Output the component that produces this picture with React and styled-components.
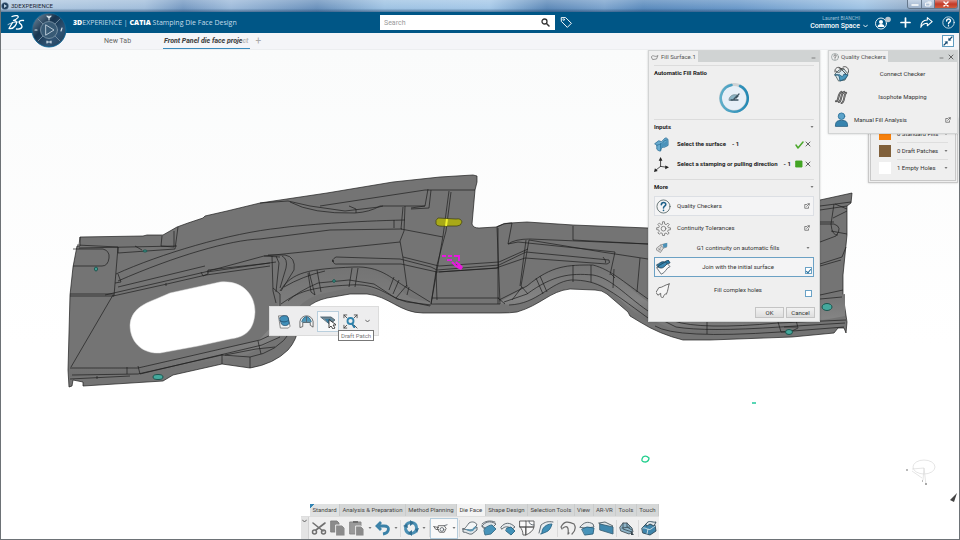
import React from "react";
import styled, { createGlobalStyle } from "styled-components";

const Global = createGlobalStyle`
  * { box-sizing: border-box; }
  body { margin: 0; background: #fff; font-family: Roboto, "Open Sans", sans-serif; font-size: 6px; line-height: 8px; color: #333; }
  button, input { font: inherit; color: inherit; margin: 0; padding: 0; border: 0; background: none; }
  svg { display: block; flex: none; }
`;

/* ---------- window frame ---------- */
const Page = styled.div`
  min-height: 100vh;
  display: grid;
  grid-template-rows: 12px 21px 17px 1fr;
  border: solid #6d7276;
  border-width: 0 1px 1px;
  overflow: hidden;
`;
const TitleBar = styled.div`
  display: flex;
  justify-content: space-between;
  background:
    linear-gradient(180deg, rgba(255,255,255,.22), rgba(255,255,255,0) 70%, rgba(20,60,100,.55) 100%),
    linear-gradient(90deg, #b3cbe2 0, #a2bedb 15%, #7599c2 19%, #9dbada 24%, #6a91bc 33%, #9fc3e3 40%, #a5c8e8 51%, #5d89b8 57%, #7ba3cd 63%, #5b8bbd 67%, #6c9aca 77%, #9fc3e4 90%, #90a8c4 96%);
`;
const AppName = styled.div`
  display: flex;
  align-items: center;
  gap: 2px;
  color: #1b2733;
`;
const WinButtons = styled.div`
  display: flex;
  align-self: flex-start;
  margin-right: 1px;
  border: solid #66788c;
  border-width: 0 1px 1px;
  border-radius: 0 0 3px 3px;
  overflow: hidden;
`;
const WinButton = styled.button`
  width: ${(p) => (p.$close ? "23px" : "13px")};
  height: 8px;
  display: grid;
  place-items: center;
  color: #fff;
  background: ${(p) => (p.$close ? "linear-gradient(#dc8c82,#c43a28 50%,#cf5d3e)" : "linear-gradient(#c6d5e6,#9db1ca)")};
  & + & { border-left: 1px solid #66788c; }
`;

/* ---------- header ---------- */
const Header = styled.header`
  display: grid;
  grid-template-columns: 379fr 175px 404fr;
  align-items: center;
  background: #005686;
  color: #fff;
`;
const Brand = styled.div`
  position: relative;
  display: flex;
  align-items: center;
  padding-left: 6px;
  gap: 47px;
  font-family: "Open Sans", sans-serif;
  font-size: 7px;
  color: #c5dce9;
  white-space: nowrap;
  b { color: #fff; font-weight: 800; }
`;
const Compass = styled.button`
  position: absolute;
  left: 30px;
  top: -2px;
  z-index: 5;
`;
const SearchBox = styled.label`
  height: 15px;
  display: flex;
  align-items: center;
  padding: 0 5px 0 4px;
  background: #fff;
  color: #444;
  input { flex: 1; min-width: 0; outline: 0; font-size: 7px; }
  input::placeholder { color: #999; opacity: 1; }
`;
const HeaderTools = styled.div`
  display: flex;
  align-items: center;
  padding: 0 4px 0 5px;
`;
const User = styled.button`
  margin-left: auto;
  margin-right: 7px;
  text-align: right;
  font-size: 7px;
  font-weight: 500;
  line-height: 9px;
  white-space: nowrap;
  color: #fff;
  small { display: block; padding-right: 8px; font-size: 5px; font-weight: 400; line-height: 7px; color: #9cc0d6; }
  span { display: flex; align-items: center; gap: 3px; }
`;
const IconRow = styled.div`
  display: flex;
  align-items: center;
  gap: 9px;
`;
const IconButton = styled.button`
  display: grid;
  place-items: center;
`;

/* ---------- document tabs ---------- */
const TabBar = styled.nav`
  display: flex;
  align-items: center;
  padding: 0 5px 0 102px;
  background: #f4f5f8;
  border-bottom: 1px solid #eceef0;
  font-size: 7px;
`;
const DocTab = styled.button`
  height: 15px;
  padding: 0 ${(p) => (p.$active ? "2px" : "1px")} 0 1px;
  margin-right: ${(p) => (p.$active ? "5px" : "31px")};
  white-space: nowrap;
  color: #666;
  font-weight: ${(p) => (p.$active ? 800 : 400)};
  font-style: ${(p) => (p.$active ? "italic" : "normal")};
  border-bottom: ${(p) => (p.$active ? "1px solid #3a8bbd" : "1px solid transparent")};
  span { color: ${(p) => (p.$active ? "#444" : "inherit")}; }
  i { color: #bbb; }
`;
const AddTab = styled.button`
  color: #aaa;
  font-size: 10px;
`;
const Collapse = styled.button`
  margin-left: auto;
  width: 12px;
  height: 12px;
  display: grid;
  place-items: center;
  border: 1px solid #5f9cc0;
  background: #fff;
`;

/* ---------- workspace ---------- */
const Canvas = styled.main`
  position: relative;
  background: linear-gradient(#fafbfb, #fff 60%);
  overflow: hidden;
`;
const Scene = styled.svg`
  position: absolute;
  inset: 0;
  width: 100%;
  height: 100%;
`;
const Panel = styled.section`
  position: absolute;
  background: #efefef;
  border: 1px solid #d2d4d4;
  box-shadow: 0 0 2px rgba(0,0,0,.2);
`;
const FillPanel = styled(Panel)`
  top: 0;
  right: 139px;
  width: 172px;
`;
const CheckPanel = styled(Panel)`
  top: 0;
  right: 1px;
  width: 130px;
`;
const CountPanel = styled(Panel)`
  top: 68px;
  right: 1px;
  width: 90px;
  padding: 4px 7px 4px 8px;
  border: 3px double #c8c8c8;
`;
const PanelHead = styled.header`
  display: flex;
  align-items: center;
  height: 11px;
  padding-right: 3px;
  gap: 4px;
  background: #d0d3d3;
  color: #555;
`;
const PanelTitle = styled.div`
  display: flex;
  align-items: center;
  gap: 2px;
  height: 100%;
  padding: 0 2px;
  margin-right: auto;
  background: #efefef;
  white-space: nowrap;
`;
const PanelBody = styled.div`
  padding: ${(p) => (p.$flush ? "0 5px 2px" : "3px 5px")};
`;
const SectionHead = styled.h2`
  display: flex;
  justify-content: space-between;
  align-items: center;
  height: 15px;
  margin: 0;
  border-top: 1px solid #dcdcdc;
  font-size: 6px;
  font-weight: 700;
  color: #222;
`;
const RatioDial = styled.div`
  display: grid;
  place-items: center;
  height: 39px;
  padding-bottom: 3px;
`;
const Field = styled.div`
  display: grid;
  grid-template-columns: 22px 1fr 9px 6px;
  place-items: center start;
  height: 20px;
  margin-bottom: ${(p) => (p.$last ? "5px" : 0)};
  padding-right: 3px;
  white-space: nowrap;
  font-weight: 700;
  color: #222;
  column-gap: 1px;
`;
const FieldText = styled.div`
  display: flex;
  gap: 6px;
`;
const Options = styled.div`
  padding-top: 2px;
`;
const Option = styled.label`
  display: grid;
  grid-template-columns: 21px 1fr 8px;
  align-items: center;
  justify-items: ${(p) => (p.$left ? "start" : "center")};
  width: 100%;
  height: ${(p) => p.$h || 20}px;
  margin-bottom: ${(p) => p.$gap || 0}px;
  padding: 0 1px;
  border: 1px solid ${(p) => p.$line || "transparent"};
  background: ${(p) => (p.$line ? "#f4f4f5" : "none")};
  white-space: nowrap;
  span { padding-right: 5px; }
  svg:first-child { justify-self: start; }
`;
const Check = styled.input`
  appearance: none;
  align-self: end;
  width: 7px;
  height: 7px;
  margin-bottom: 2px;
  border: 1px solid #6aa2c6;
  background: #fff;
  &:checked::after {
    content: "";
    display: block;
    width: 2px;
    height: 4px;
    margin-left: 1px;
    border: solid #2b6f9a;
    border-width: 0 1px 1px 0;
    transform: rotate(40deg);
  }
`;
const Buttons = styled.div`
  display: flex;
  justify-content: flex-end;
  gap: 2px;
  margin: 7px -1px 0 0;
`;
const PushButton = styled.button`
  width: 29px;
  height: 11px;
  border: 1px solid #c4c4c4;
  background: linear-gradient(#f2f2f2, #dedede);
`;
const CheckItem = styled.button`
  display: grid;
  grid-template-columns: 20px 1fr auto;
  align-items: center;
  width: 100%;
  height: 23px;
  text-align: ${(p) => (p.$left ? "left" : "center")};
  padding: 0 1px 0 0;
  white-space: nowrap;
`;
const CountRow = styled.div`
  display: grid;
  grid-template-columns: 12px 1fr auto;
  align-items: center;
  gap: 6px;
  height: 17px;
  white-space: nowrap;
  & + & { background: linear-gradient(#dedede, #dedede) 18px 0 / 100% 1px no-repeat; }
`;
const Swatch = styled.span`
  height: 12px;
  background: ${(p) => p.$color};
`;
const ContextBar = styled.div`
  position: absolute;
  left: 268px;
  top: 256px;
  width: 110px;
  height: 30px;
  padding: 4px 3px;
  display: flex;
  align-items: center;
  background: #ededee;
  border: 1px solid #dcdcdc;
`;
const ContextButton = styled.button`
  width: ${(p) => (p.$caret ? "12px" : "22px")};
  height: 21px;
  display: grid;
  place-items: center;
  border: 1px solid ${(p) => (p.$hover ? "#b9cfdd" : "transparent")};
  background: ${(p) => (p.$hover ? "#f7f8f9" : "none")};
`;
const Tip = styled.div`
  position: absolute;
  left: 337px;
  top: 280px;
  padding: 0 2px;
  line-height: 9px;
  background: #fff;
  border: 1px solid #777;
  color: #777;
`;

/* ---------- action bar ---------- */
const ActionBar = styled.div`
  position: absolute;
  left: 50%;
  bottom: 0;
  transform: translateX(-50%);
  width: 358px;
`;
const ActionTabs = styled.div`
  display: flex;
  justify-content: space-between;
  margin-left: 9px;
  height: 12px;
  background: #d5d7d7;
`;
const ActionTab = styled.button`
  flex: auto;
  padding: 0 1px;
  white-space: nowrap;
  color: #444;
  background: ${(p) => (p.$active ? "#f3f3f3" : p.$first ? "linear-gradient(135deg,#3285b4 3px,#dfe1e1 3px)" : "none")};
  border-right: 1px solid #c9cbcb;
`;
const Tools = styled.div`
  display: flex;
  align-items: center;
  height: 23px;
  padding-right: 1px;
  background: #efefef;
  border-top: 1px solid #dedede;
`;
const Handle = styled.button`
  align-self: stretch;
  width: 8px;
  padding-bottom: 14px;
  background: #e4e4e4;
  border-right: 1px solid #d2d2d2;
  display: grid;
  place-items: center;
`;
const Tool = styled.button`
  width: ${(p) => (p.$caret ? "7px" : "19px")};
  height: 19px;
  display: grid;
  place-items: center;
`;
const ToolPair = styled.div`
  display: flex;
  border: 1px solid #b5cddd;
  background: #f9f9f9;
`;
const Sep = styled.i`
  flex: 1;
  max-width: 5px;
  height: 17px;
  border-left: 1px solid #dadada;
  margin-left: 1px;
`;

/* ---------- icons ---------- */
const Icon = ({ s = 16, w, h, vb = "0 0 16 16", children }) => (
  <svg width={w || s} height={h || s} viewBox={vb} fill="none" stroke="#566068" strokeWidth=".9" strokeLinejoin="round" strokeLinecap="round">{children}</svg>
);
const Caret = () => <Icon s={4} vb="0 0 4 4"><path d="M.5 1h3L2 3z" fill="#777" stroke="none" /></Icon>;
const Chevron = ({ color = "#555" }) => <Icon w={5} h={4} vb="0 0 5 4"><path d="M.5 1L2.5 3L4.5 1" stroke={color} /></Icon>;
const Popout = () => <Icon s={6} vb="0 0 8 8"><path d="M3.500 2H1v5h5V5M3.500 4.500L7 1M5 1h2v2" stroke="#555" /></Icon>;
const Cross = () => <Icon s={6} vb="0 0 6 6"><path d="M1 1l4 4M5 1L1 5" stroke="#555" /></Icon>;
const Dash = () => <Icon w={5} h={5} vb="0 0 5 5"><path d="M1 4h3" stroke="#777" /></Icon>;
const HelpIcon = ({ s = 15, c = "#1c5f88", ring = "#566" }) => (
  <Icon s={s}><circle cx="8" cy="8" r="7" stroke={ring} /><path d="M5.700 6.200c0-3.400 5-3.200 4.700-.2C10.200 7.800 8 7.500 8 9.600M8 12v.2" stroke={c} strokeWidth="1.700" /></Icon>
);
const Gear = () => (
  <Icon s={15}>
    <path d="M6.800 3.200L7 .8h2l.2 2.400 1.600.7 1.900-1.600 1.400 1.500-1.600 1.800.6 1.500 2.300.2v2l-2.300.3-.7 1.500 1.600 1.900-1.500 1.300-1.800-1.500-1.500.6L9 15.500H7l-.3-2.300-1.500-.6-1.800 1.500L2 12.700l1.500-1.800L2.900 9.500.7 9.200v-2l2.300-.2.6-1.500L2 3.700l1.500-1.500 1.800 1.500z" stroke="#777" />
    <circle cx="8" cy="8.200" r="2.500" stroke="#777" />
  </Icon>
);
const Sheet = () => (
  <Icon s={15}><path d="M1 7L5 4l3 1 4-4c2 0 3 1 3 3v5l-4 2c-2 0-3 0-4 4-2 0-3-1-4-2V9z" fill="#69abcf" stroke="#2f7199" /><path d="M3 9c3-2 5 0 8-5l3-1M7 7v7" stroke="#2c7299" /><path d="M8 7c3 0 4-2 6-3v5l-4 1-3 3z" fill="#4b92ba" stroke="none" /></Icon>
);
const AxisIcon = () => <Icon s={15}><path d="M7 10V2M7 10l7 1M7 10l-5 4" stroke="#333" /><path d="M7 0l2 4H5zM16 11l-4-2v4zM0 16l1-4 3 3z" fill="#222" stroke="none" /></Icon>;
const JoinIcon = () => <Icon s={15}><path d="M1 5c3-1 4-4 8-3l4-2 2 3C12 4 11 7 8 6L3 9z" fill="#277aa5" stroke="#24455a" /><path d="M1 8l3-1c3 1 5-1 8-3l3 3c-4 1-5 7-9 8z" fill="#fafafa" /><path d="M3 8c4 2 6-1 9-4l-2-2-7 4z" fill="#3c88b2" stroke="#24455a" /></Icon>;
const HoleIcon = () => <Icon s={15}><path d="M14 1c-1 3-1 7-3 11-2-1-2 1-4 4-2-1-2-2-2-5l-3 2-2-3 3-5c4 0 6-3 11-4z" fill="#f5f5f5" stroke="#555" /></Icon>;
const G1Icon = () => <Icon s={12}><path d="M1 8l5-4 4 4-4 6-5-3zM6 4l7-2 1 5-4 1" fill="#ddd" stroke="#777" /><path d="M9 3l6-2v5l-5 2z" fill="#4b91b7" stroke="none" /><path d="M3 9l4 2M4 11l3-5" stroke="#888" /></Icon>;
const ConnectIcon = () => <Icon s={16}><path d="M1 8l4-4 5-1 4 5-3 6-6 1z" fill="#d8e8ef" stroke="#566" /><path d="M1 9c5-1 4 2 5 6l5-2 3-4-4-1c-1 3-2 3-4 1z" fill="#4a98be" stroke="#255a78" /><path d="M1 6c-1-5 5-6 6-3s-4 5-5 2M9 1c4-2 7 3 5 6M8 4l4 4M5 2l5 1" stroke="#444" /></Icon>;
const IsoIcon = () => <Icon s={15}><path d="M2 13c4 0 1-7 6-10M5 14c4-1 1-8 6-11M8 15c4-1 2-9 5-11" stroke="#444" strokeWidth="2" /><path d="M2 13c4 0 1-7 6-10M5 14c4-1 1-8 6-11M8 15c4-1 2-9 5-11" stroke="#bbb" strokeWidth=".6" /></Icon>;
const PersonIcon = () => <Icon s={15}><circle cx="8" cy="4.500" r="3.500" fill="#5ba3ca" stroke="#2c6f98" /><path d="M1.500 15c0-5 2-6 6.500-6s6.500 1 6.500 6z" fill="#3784ae" stroke="#245f83" /></Icon>;
const FillIcon = () => (
  <Icon s={32} vb="0 0 32 32">
    <defs><linearGradient id="dial" x1="0" x2="1"><stop stopColor="#5eaeca" /><stop offset="1" stopColor="#2389b5" /></linearGradient></defs>
    <circle cx="16" cy="16" r="13.500" stroke="#cfd2d4" strokeWidth="3" fill="#e7eff7" />
    <path d="M22 4A13.500 13.500 0 1 1 13.500 3" stroke="url(#dial)" strokeWidth="2.500" />
    <path d="M11 18c0-4 4-6 8-5l-4 5z" fill="#8ab3c4" stroke="#7c929c" /><path d="M21 12l-5 5M13 18h7M18 16l2-2" stroke="#3c5361" strokeWidth="1.300" />
  </Icon>
);

const toolIcons = {
  cut: <><path d="M2 3l10 8M14 3L5 10" stroke="#707070" strokeWidth="1.600" /><circle cx="3.500" cy="12" r="2" stroke="#707070" strokeWidth="1.500" /><circle cx="12.500" cy="12" r="2" stroke="#707070" strokeWidth="1.500" /></>,
  copy: <><path d="M1 1h6l2 2v9H1z" fill="#8b8b8b" stroke="#7d7d7d" /><path d="M6 5h6l3 3v8H6z" fill="#8b8b8b" stroke="#f2f2f2" /></>,
  paste: <><path d="M1 2h11v12H1z" fill="#9a9a9a" stroke="#858585" /><path d="M4 1h5v2H4z" fill="#6f6f6f" stroke="none" /><path d="M7 6h5l3 3v7H7z" fill="#8b8b8b" stroke="#f2f2f2" /></>,
  undo: <path d="M4 6h5c7 0 5 7-1 8M6 2L2 6l4 4" stroke="#3b82a8" strokeWidth="2.800" strokeLinejoin="miter" strokeLinecap="butt" />,
  update: <><circle cx="8" cy="8" r="5.500" stroke="#4a8fb3" strokeWidth="3" strokeDasharray="7 1.700" /><path d="M7 0l4 3-4 3zM9 10v6l-4-3zM0 6l4-2 1 4zM12 9l4-1-2 5z" fill="#316f92" stroke="none" /></>,
  trim: <><path d="M1 6l5 1M1 6l2 3h3M6 5h6l2 3-2 4H7L5 9z" stroke="#555" /><circle cx="9.500" cy="9" r="2" /><path d="M12 5l3-1" /></>,
  a: <><path d="M1 9c2 0 3-2 6-6 3-2 7-1 8 2l-5 5c-3 1-6-1-9-1z" fill="#f3f6f7" /><path d="M1 9v3c4 0 6 3 9 2l5-4V7l-5 3c-3 1-6-1-9-1z" fill="#dfe6e9" /><path d="M3 9c3 0 7 2 9-2l3-1-4 5c-3 1-5 0-8-2z" fill="#5b97b5" stroke="none" /></>,
  b: <><path d="M1 6c3-4 8-6 14-2l-3 3-8 2z" fill="#e0e5e8" /><path d="M4 8c3-2 5-3 7-3l4 4-5 5-6 1-1-4z" fill="#4793b9" stroke="#386c87" /><path d="M1 6l3 2M1 4c3-3 8-4 13-2" /></>,
  c: <><path d="M1 7c4-5 9-5 14 0l-3 2C8 6 5 6 2 9z" fill="#e4e8ea" /><path d="M7 8l4-1 4 4-4 4-5-4z" fill="#4191b8" stroke="#29637f" /></>,
  d: <><path d="M1 1h6v6H1zM7 1h8v6H7M1 7h6v8H4C4 12 3 9 1 7zM7 7h8c-1 4-4 6-8 8z" fill="#fafafa" stroke="#555" /><path d="M10 1c0 3 2 4 5 4" /></>,
  e: <><path d="M1 13L3 5c4-3 7-4 12-3" fill="#e8eef0" /><path d="M4 12c0-4 4-8 10-8-1 4-3 7-6 8l-5 2z" fill="#4191b8" stroke="#2a6688" /></>,
  f: <><path d="M1 7c3-6 7-6 13-3M1 7l1 2M3 8c4-3 6-1 5 6M14 4c2 3 1 7-2 10M8 14l1-1" stroke="#6a6a6a" strokeWidth="1.200" /></>,
  g: <><path d="M1 7c4-5 8-6 13-3l1 3-8 1z" fill="#e6eaec" /><path d="M3 9l5-2 7 1-1 6-8 1z" fill="#4793b9" stroke="#285f7c" /></>,
  h: <><path d="M1 3l6-1 8 4-2 2-9-3z" fill="#e0e6e9" stroke="#4d5b61" /><path d="M2 4l13 3v7L2 10z" fill="#4088ae" stroke="#3b6378" /></>,
  i: <><path d="M1 7l3-4 4 0 5 5 1 4-4 2-8-3z" fill="#8cb3c7" stroke="#444f57" /><path d="M4 3v6l9 3M8 3v4l5 3M3 8l8-1" stroke="#40535e" /><path d="M12 11l3 4h-3z" fill="#39464e" stroke="none" /></>,
  j: <><path d="M1 8l5-5 8 2 1 6-6 4-7-2z" fill="#3f86ac" stroke="#2c4757" /><path d="M2 8c3-1 5 3 8 1l4-3M7 9l-1 5" stroke="#cfe0e8" /><path d="M5 4c3-5 6-1 10-2l-2 4-4-2-3 2z" fill="#e0e6e9" stroke="#2c4757" /></>,
};
const T = ({ n, label, s = 16 }) => <Tool aria-label={label}><Icon s={s}>{toolIcons[n]}</Icon></Tool>;
const More = ({ label }) => <Tool $caret aria-label={label}><Caret /></Tool>;

/* ---------- stamped part ---------- */
const outline = "M80 237L143 236L147 235L163 235L177 227L188 223L203 218L205 216L227 211L260 203L327 193L393 182L440 177L473 175L477 176L477 182L475 190L472 224Q473 228 479 228L496 227Q504 223 510 223L527 222L573 225L648 228L820 200L852 193L851 203L847 206L847 235L843 275L843 295L847 322L846 333L844 328L838 328L834 333L792 337L710 340L683 340Q659 334 640 322L630 316L628 312L607 294Q602 290 595 290L570 289C550 291 541 305 517 312Q510 313 500 313L423 313C400 313 389 296 367 294L350 294L327 298C310 302 302 310 299 325Q297 340 288 350Q274 364 250 368L222 364L173 375L163 381L83 386L83 382L73 380L72 386L69 387L68 370L70 295L73 267L77 246L80 246Z";
const Part = () => (
  <Scene viewBox="1 50 958 489" preserveAspectRatio="xMidYMid slice" fill="none" stroke="#1e1e1e" strokeWidth=".7" aria-label="Front panel die face">
    <defs><linearGradient id="bend" x1="0" y1="0" x2="0" y2="1"><stop stopColor="#747474" /><stop offset=".6" stopColor="#848484" /><stop offset="1" stopColor="#6e6e6e" /></linearGradient></defs>
    <path d={outline} fill="#747474" />
    <g fill="url(#bend)" stroke="none">
      <path d="M280 291C292 272 310 269 358 268C383 270 393 286 411 298L437 304H430L413 302C390 301 382 286 354 287L320 294C300 300 288 317 279 337L262 347L246 355L138 374L70 377V368L138 366L258 341L276 322Z" />
      <path d="M498 303L529 285C552 265 570 266 597 266C616 272 626 286 648 302V322C621 305 612 285 590 281L571 281C548 282 536 305 510 305Z" />
      <path d="M648 310L700 315L845 294V316L780 328L700 334L676 331L648 318Z" />
    </g>
    <path fill="#fff" stroke="#ddd" strokeWidth=".5" d="M170 293L220 282C242 280 255 294 255 312C254 330 246 337 230 339L198 346L160 353C141 354 130 341 130 325C131 310 143 304 156 299Z" />
    <path d="M77 245L118 247L118 253L175 249L178 227M79 248L177 246M118 247L114 296L70 296M70 294L114 294M113 295L71 367M73 249H103Q110 251 109 258Q108 266 102 266L73 266M162 236L161 246L174 247V231M80 237L79 245M135 246L142 250" />
    <path d="M116 274C160 254 230 233 280 228C300 225 355 221 405 220M118 281C175 256 230 240 260 239L330 230L402 229M118 274L121 282L115 283M105 295L205 272L264 256L400 242" />
    <path d="M113 296L167 284L206 275L270 266M166 283V286M201 272L203 276L208 274V270L270 263M264 256L280 257M118 287L205 266M207 272L276 262" />
    <path d="M260 203L288 201L310 206L345 211L379 207L383 206M290 202Q312 214 355 213Q370 212 380 206L425 206L428 189M320 206L425 190L475 190M431 190L429 208L411 209M425 206L411 208M349 206L356 209V213" />
    <path d="M405 206L404 231L400 241L403 258L407 287M403 207L401 229M449 191L443 236L431 304M451 192L446 231L437 265L431 304M401 229L443 237M394 220V228" />
    <path d="M333 262Q331 260 336 257L400 259L431 267L437 270L499 265L526 252L609 260Q611 263 607 264L525 258L496 268L437 272L401 264L338 264Q333 265 333 260Z M403 257L439 266L499 262L528 249" />
    <path d="M268 255L285 255Q296 257 294 270L281 291M272 256L273 291L276 303M276 256L279 263L276 292M282 256Q288 259 286 268L280 288M273 288L280 294L280 310L275 316M280 291C292 272 308 269 354 267C380 266 391 278 404 286L430 302M284 287Q303 276 325 271M288 301Q297 292 318 283L349 280L374 284L397 299L430 306M281 304C298 292 310 287 350 285C379 283 385 296 407 302L431 305" />
    <path d="M309 272L315 295L311 292L308 273M317 270L321 292M352 268L349 287M358 268L355 287M394 277L389 290M399 280L393 294M407 285L396 298M409 287L407 295M432 298H499M431 304H500L497 227M498 228V304M439 272L499 268M436 271L437 300" />
    <path d="M497 227Q504 222 512 223L508 244Q515 239 530 239L648 244M529 240L521 286L528 294M526 240L520 286M573 226V240L648 244M529 240L602 252L648 259M615 252L610 275M640 258L637 292M508 244L518 242L615 252M603 257Q607 262 605 263" />
    <path d="M499 300L527 286C552 265 568 265 593 265C611 270 621 280 648 299M504 302L527 294C553 275 570 273 593 275C611 278 625 295 648 311M509 305C538 304 550 282 571 280C599 280 608 289 648 318M536 278L543 294M540 276L547 292M573 265V282M591 265V282M611 274L615 278M614 269L613 288M522 287L512 300M498 298L505 304" />
    <path d="M820 206L851 202M820 210L847 206M834 204L831 224Q832 236 838 235M834 222H820M820 224H834Q843 227 836 236L820 242M831 231L847 234M820 264L842 257L846 247M820 266L841 260M820 295L843 290M820 299L842 297M835 204L847 209M833 218L847 211" />
    <path d="M648 306L674 321Q700 330 778 323L846 320M648 313L676 327Q706 332 780 327L845 323M655 326Q676 339 780 332L844 327M707 321V334M778 322L781 332H790L798 328L796 320M784 327H797" />
    <path d="M70 368H138L260 340L284 329L292 316M138 366L140 374L262 345L280 337M72 375L138 374L222 355L250 357Q278 352 291 331M222 354V364M225 355L256 349L275 347M250 357V368M258 341L261 354M127 367V374M97 376V379M70 379L130 376" />
    <g fill="#45a99d" stroke="#1b554e" strokeWidth="1">
      <ellipse cx="158" cy="377" rx="5" ry="2.500" /><ellipse cx="145" cy="251" rx="2" ry="1" /><ellipse cx="96" cy="269" rx="1.500" ry="2" /><circle cx="334" cy="281" r="1.300" />
      <ellipse cx="827" cy="307" rx="5" ry="3.500" /><ellipse cx="789" cy="332" rx="3.500" ry="2.500" />
    </g>
    <path d="M438 218Q435 220 436 224Q437 227 447 226L457 226Q461 226 462 222Q461 218 456 219Z" fill="#a8a918" stroke="#3b3b12" /><path d="M447 219L446 226" stroke="#eef02e" strokeWidth="2" />
    <path d="M442 256H446M448 256H452M454 256H460M459 256V261M447 260H452M452 262L457 267M456 262L459 265" stroke="#e818df" strokeWidth="2" /><path d="M457 266l2-3 4 4-2 3-4-2z" fill="#eb19df" stroke="none" />
    <path d="M752 403H756" stroke="#21c99c" strokeWidth="1.500" /><path d="M643 457Q646 455 649 458Q649 461 646 462Q641 462 642 459Z" stroke="#24cf8e" strokeWidth="1.300" />
    <g stroke="#dadada"><ellipse cx="924" cy="467" rx="11" ry="7" /><path d="M912 469L924 468L923 480M912 471L922 478M924 468L926 485" /><path d="M906 470h2M922 481h1M926 483v2" stroke="#777" strokeWidth="1.200" /></g>
    <path d="M957 493L950 500L954 502Z" fill="#444" stroke="none" />
  </Scene>
);

export default function App() {
  return (
    <Page>
      <Global />
      <TitleBar>
        <AppName><Icon s={8}><circle cx="8" cy="8" r="7" fill="#1d3b58" stroke="#7896b0" /><path d="M6 4l6 4-6 4z" fill="#b5cde0" stroke="none" /></Icon>3DEXPERIENCE</AppName>
        <WinButtons>
          <WinButton aria-label="Minimize"><Icon w={8} h={5} vb="0 0 8 5"><path d="M1 3h6" stroke="#fff" strokeWidth="1.500" /></Icon></WinButton>
          <WinButton aria-label="Restore"><Icon w={7} h={6} vb="0 0 7 6"><path d="M1 2h4v3H1zM3 1h3v3" stroke="#fff" /></Icon></WinButton>
          <WinButton $close aria-label="Close"><Icon s={6} vb="0 0 6 6"><path d="M1 1l4 4M5 1L1 5" stroke="#fff" strokeWidth="1.500" /></Icon></WinButton>
        </WinButtons>
      </TitleBar>
      <Header>
        <Brand>
          <Icon w={19} h={17} vb="0 0 19 17">
            <path d="M5 2.500C9 .8 12 1.500 11 3.500C10 5 8 6 6.500 6.500C10 6.500 10.500 9 8 12C6.500 14 4 15 2 14.500C3.500 12 4.500 10 5.500 8.500" stroke="#fff" strokeWidth="1.300" />
            <path d="M16.500 6.500C13 6 11.500 7.500 12.500 9L14.500 11C16 13.500 14 15.500 9.500 15" stroke="#fff" strokeWidth="1.400" />
            <path d="M1 10.500C4 8.800 8 8 11 8" stroke="#fff" strokeWidth=".7" />
          </Icon>
          <Compass aria-label="Compass">
            <Icon s={36} vb="0 0 36 36">
              <defs><linearGradient id="dialFace" x1="0" y1="0" x2="1" y2="1"><stop stopColor="#8198aa" /><stop offset=".4" stopColor="#17344f" /><stop offset=".7" stopColor="#2f5475" /><stop offset="1" stopColor="#1c374e" /></linearGradient></defs>
              <circle cx="18" cy="18" r="17" fill="url(#dialFace)" stroke="#0b6596" />
              <path d="M7 7l7 7M29 7l-7 7M7 29l7-7M29 29l-7-7" stroke="#8aa2b5" strokeWidth=".7" />
              <circle cx="18" cy="18" r="8.500" fill="#385a75" stroke="#7892a5" /><path d="M15 13l8 5-8 5z" stroke="#c5d4df" />
              <path d="M16 4l2 2 2-2M18 4v4M4 18h2M30 19l1-3M16 30h4M16 29v2M20 29v2" stroke="#dce7ee" strokeWidth="1.100" />
            </Icon>
          </Compass>
          <span><b>3D</b>EXPERIENCE | <b>CATIA</b> Stamping Die Face Design</span>
        </Brand>
        <SearchBox><input type="search" placeholder="Search" aria-label="Search" /><Icon s={9} vb="0 0 9 9"><circle cx="3.500" cy="3.500" r="2.500" stroke="#333" strokeWidth="1.300" /><path d="M5.500 5.500L8 8" stroke="#333" strokeWidth="1.500" /></Icon></SearchBox>
        <HeaderTools>
          <IconButton aria-label="Tags"><Icon s={13}><path d="M2 2h5l7 7-5 5-7-7z" stroke="#fff" strokeWidth="1.200" /><circle cx="4.500" cy="4.500" r="1" stroke="#fff" /></Icon></IconButton>
          <User><small>Laurent BIANCHI</small><span>Common Space <Chevron color="#fff" /></span></User>
          <IconRow>
            <IconButton aria-label="Profile"><Icon w={16} h={14} vb="0 0 16 14"><circle cx="6" cy="7.500" r="5.500" stroke="#fff" /><circle cx="6" cy="6" r="2" fill="#fff" stroke="none" /><path d="M2.500 11c0-4 7-4 7 0z" fill="#fff" stroke="none" /><circle cx="13" cy="3.500" r="2.800" fill="#bac7cf" stroke="none" /></Icon></IconButton>
            <IconButton aria-label="Add"><Icon s={11} vb="0 0 11 11"><path d="M5.500 1v9M1 5.500h9" stroke="#fff" strokeWidth="1.700" /></Icon></IconButton>
            <IconButton aria-label="Share"><Icon s={13}><path d="M9 2l6 5-6 5V9C6 9 3 10 1 14c0-6 3-9 8-9z" stroke="#fff" strokeWidth="1.300" /></Icon></IconButton>
            <IconButton aria-label="Help"><HelpIcon s={13} c="#fff" ring="#fff" /></IconButton>
          </IconRow>
        </HeaderTools>
      </Header>
      <TabBar>
        <DocTab>New Tab</DocTab>
        <DocTab $active><span>Front Panel die face proje</span><i>ct</i></DocTab>
        <AddTab aria-label="Add tab">+</AddTab>
        <Collapse aria-label="Collapse"><Icon s={10} vb="0 0 10 10"><path d="M9 1L6 4M1 9l3-3" stroke="#174d74" strokeWidth="1.200" /><path d="M5.500 1.500v3h3zM1.500 5.500h3v3z" fill="#174d74" stroke="none" /></Icon></Collapse>
      </TabBar>
      <Canvas>
        <Part />
        <ContextBar>
          <ContextButton aria-label="Fill"><Icon s={15}><path d="M2 2h9l3 11-2 2H4z" fill="#f5f5f5" stroke="#777" /><path d="M3 4c2-3 8-3 9 0l1 6c-2 3-6 3-8 1z" fill="#4190ba" stroke="#22506e" /><path d="M3 7c3 2 6 2 9 0" stroke="#22506e" /></Icon></ContextButton>
          <ContextButton aria-label="Cap"><Icon s={15}><path d="M1 14V8c1-8 13-8 14 0v6l-3-2V9H4v4z" fill="#f7f7f7" stroke="#555" /><path d="M3 8c2-7 8-7 10 0z" fill="#4c97ba" stroke="#28688a" /><path d="M8 3v5" /></Icon></ContextButton>
          <ContextButton $hover aria-label="Draft patch"><Icon s={16}><path d="M1 4h10l4 3-5 4z" fill="#6c8795" stroke="#4e626e" /><path d="M5 6h6v5H9z" fill="#377fa5" stroke="none" /><path d="M9 7v8l2-2 2 3 2-1-2-3h3z" fill="#fff" stroke="#333" /></Icon></ContextButton>
          <ContextButton aria-label="Fit"><Icon s={15}><path d="M1 1l3 3M15 1l-3 3M1 15l3-3M15 15l-3-3M1 4V1h3M12 1h3v3M1 12v3h3" stroke="#444" /><circle cx="8" cy="7.500" r="3.200" stroke="#3284ad" strokeWidth="2" /><path d="M10 11l2 3" stroke="#287aa5" strokeWidth="2" /></Icon></ContextButton>
          <ContextButton $caret aria-label="More commands"><Chevron /></ContextButton>
        </ContextBar>
        <Tip role="tooltip">Draft Patch</Tip>

        <CountPanel>
          <CountRow><Swatch $color="#f6800c" />0 Standard Fills<Caret /></CountRow>
          <CountRow><Swatch $color="#80603b" />0 Draft Patches<Caret /></CountRow>
          <CountRow><Swatch $color="#fff" />1 Empty Holes<Caret /></CountRow>
        </CountPanel>
        <CheckPanel>
          <PanelHead><PanelTitle><HelpIcon s={8} c="#555" />Quality Checkers</PanelTitle><Dash /><Cross /></PanelHead>
          <PanelBody $flush>
            <CheckItem><ConnectIcon /><span>Connect Checker</span></CheckItem>
            <CheckItem><IsoIcon /><span>Isophote Mapping</span></CheckItem>
            <CheckItem $left><PersonIcon />Manual Fill Analysis<Popout /></CheckItem>
          </PanelBody>
        </CheckPanel>
        <FillPanel>
          <PanelHead><PanelTitle><Icon s={8}><path d="M1 7c4-5 6 3 13-2l-3 7-7 1z" stroke="#777" strokeWidth="1.500" /></Icon>Fill Surface.1</PanelTitle><Dash /></PanelHead>
          <PanelBody>
            <SectionHead>Automatic Fill Ratio</SectionHead>
            <RatioDial><FillIcon /></RatioDial>
            <SectionHead>Inputs<Caret /></SectionHead>
            <Field><Sheet /><FieldText><span>Select the surface</span><span>- 1</span></FieldText><Icon s={9} vb="0 0 9 9"><path d="M1 5l2 3 5-6" stroke="#4ca82c" strokeWidth="1.500" /></Icon><IconButton aria-label="Clear surface"><Cross /></IconButton></Field>
            <Field $last><AxisIcon /><FieldText><span>Select a stamping or pulling direction</span><span>- 1</span></FieldText><Icon s={8} vb="0 0 8 8"><path d="M1 1h6v6H1z" fill="#43a524" stroke="#43a524" /></Icon><IconButton aria-label="Clear direction"><Cross /></IconButton></Field>
            <SectionHead>More<Caret /></SectionHead>
            <Options>
              <Option as="button" $left $line="#dcdfe4" $gap={2}><HelpIcon />Quality Checkers<Popout /></Option>
              <Option as="button" $left $gap={1}><Gear />Continuity Tolerances<Popout /></Option>
              <Option as="button" $h={17} $gap={1}><G1Icon /><span>G1 continuity on automatic fills</span><Caret /></Option>
              <Option $line="#6ba1c4" $gap={3}><JoinIcon /><span>Join with the initial surface</span><Check type="checkbox" defaultChecked /></Option>
              <Option><HoleIcon /><span>Fill complex holes</span><Check type="checkbox" /></Option>
            </Options>
            <Buttons><PushButton>OK</PushButton><PushButton>Cancel</PushButton></Buttons>
          </PanelBody>
        </FillPanel>

        <ActionBar>
          <ActionTabs>
            <ActionTab $first>Standard</ActionTab><ActionTab>Analysis &amp; Preparation</ActionTab><ActionTab>Method Planning</ActionTab><ActionTab $active>Die Face</ActionTab><ActionTab>Shape Design</ActionTab><ActionTab>Selection Tools</ActionTab><ActionTab>View</ActionTab><ActionTab>AR-VR</ActionTab><ActionTab>Tools</ActionTab><ActionTab>Touch</ActionTab>
          </ActionTabs>
          <Tools>
            <Handle aria-label="Toggle bar"><Chevron /></Handle>
            <T n="cut" label="Cut" /><T n="copy" label="Copy" /><T n="paste" label="Paste" /><More label="Paste options" />
            <T n="undo" label="Undo" /><More label="Undo options" /><Sep />
            <T n="update" label="Update" /><More label="Update options" /><Sep />
            <ToolPair><Tool aria-label="Trim"><Icon s={15}>{toolIcons.trim}</Icon></Tool><More label="Trim options" /></ToolPair><Sep />
            <T n="a" label="Binder" /><T n="b" label="Surface" /><T n="c" label="Addendum" /><T n="d" label="Patches" /><T n="e" label="Corner" /><Sep />
            <T n="f" label="Profile" /><T n="g" label="Die wall" /><T n="h" label="Blend" /><Sep />
            <T n="i" label="Extract" /><Sep /><T n="j" label="Check" />
          </Tools>
        </ActionBar>
      </Canvas>
    </Page>
  );
}
